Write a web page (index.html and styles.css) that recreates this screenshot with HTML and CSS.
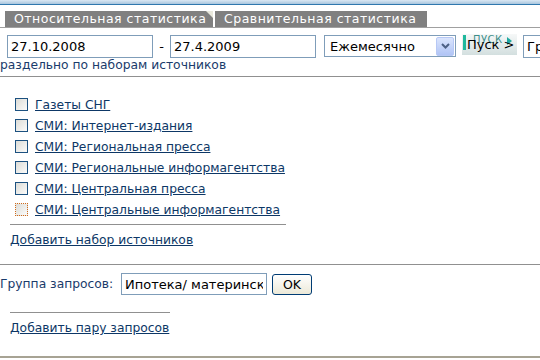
FILE: index.html
```html
<!DOCTYPE html>
<html lang="ru">
<head>
    <meta charset="UTF-8">
    <title>Статистика</title>
    <link rel="stylesheet" href="styles.css">
</head>
<body>
    <div class="topbar"></div>

    <div class="tabs">
        <div class="tab tab-first">Относительная статистика<span class="tab-corner"></span></div>
        <div class="tab">Сравнительная статистика</div>
    </div>

    <div class="filter-row">
        <input class="field date" type="text" value="27.10.2008">
        <span class="dash">-</span>
        <input class="field date" type="text" value="27.4.2009">
        <div class="select">
            <span class="select-text">Ежемесячно</span>
            <span class="select-btn">
                <svg width="9" height="6" viewBox="0 0 9 6"><path d="M1 1 L4.5 4.5 L8 1" fill="none" stroke="#4d6185" stroke-width="2"/></svg>
            </span>
        </div>
        <div class="go-btn">
            <span class="go-bar"></span>
            <span class="go-ghost">ПУСК</span>
            <span class="go-arrow"></span>
            <span class="go-text">Пуск &gt;</span>
        </div>
        <input class="field rest" type="text" value="Гр">
    </div>

    <div class="note">раздельно по наборам источников</div>

    <hr class="rule">

    <ul class="sources">
        <li><span class="box"></span><a href="#">Газеты СНГ</a></li>
        <li><span class="box"></span><a href="#">СМИ: Интернет-издания</a></li>
        <li><span class="box"></span><a href="#">СМИ: Региональная пресса</a></li>
        <li><span class="box"></span><a href="#">СМИ: Региональные информагентства</a></li>
        <li><span class="box"></span><a href="#">СМИ: Центральная пресса</a></li>
        <li><span class="box focused"></span><a href="#">СМИ: Центральные информагентства</a></li>
    </ul>
    <hr class="rule short">
    <a class="add-link" href="#">Добавить набор источников</a>

    <hr class="rule wide">

    <div class="query-row">
        <span class="query-label">Группа запросов:</span>
        <input class="field query" type="text" value="Ипотека/ материнский">
        <button class="ok-btn">OK</button>
    </div>
    <hr class="rule tiny">
    <a class="add-link" href="#">Добавить пару запросов</a>

    <div class="bottom-line"></div>
</body>
</html>
```

FILE: styles.css
```css
body {
    margin: 0;
    font-family: "DejaVu Sans", Verdana, sans-serif;
    font-size: 12px;
    color: #000;
    background-color: #fff;
    width: 540px;
    height: 360px;
    overflow: hidden;
    position: relative;
}

.topbar {
    height: 4px;
    background: linear-gradient(#dbe8f3, #a9c6de);
    border-bottom: 1px solid #2f78ae;
}

.tabs {
    display: flex;
    margin-top: 6px;
    padding-left: 5px;
    border-bottom: 1px solid #a0a0a0;
    height: 16px;
}

.tab {
    position: relative;
    flex-shrink: 0;
    background-color: #808080;
    color: #fff;
    font-size: 12.5px;
    letter-spacing: 0.5px;
    line-height: 16px;
    width: 203px;
    padding-left: 9px;
    margin-right: 2px;
    white-space: nowrap;
}

.tab-first {
    width: 199px;
}

.tab-corner {
    position: absolute;
    right: 0;
    top: 0;
    width: 0;
    height: 0;
    border-top: 7px solid #e8e8dc;
    border-left: 7px solid transparent;
}

.filter-row {
    display: flex;
    align-items: center;
    margin-top: 6px;
    padding-left: 7px;
    height: 24px;
    white-space: nowrap;
}

.filter-row > * {
    flex-shrink: 0;
}

.field {
    box-sizing: border-box;
    height: 23px;
    border: 1px solid #7f9db9;
    font-family: "DejaVu Sans", Verdana, sans-serif;
    font-size: 13px;
    padding: 1px 3px;
    color: #000;
}

.date {
    width: 146px;
}

.dash {
    width: 17px;
    text-align: center;
    font-size: 13px;
}

.select {
    box-sizing: border-box;
    display: flex;
    align-items: center;
    justify-content: space-between;
    width: 132px;
    height: 22px;
    margin-left: 8px;
    border: 1px solid #7f9db9;
    padding: 0 1px 0 5px;
    font-size: 13px;
}

.select-btn {
    display: flex;
    align-items: center;
    justify-content: center;
    width: 16px;
    height: 17px;
    border: 1px solid #b7c8f5;
    border-radius: 2px;
    background: linear-gradient(#dbe5fd, #b0c4f5);
}

.go-btn {
    position: relative;
    box-sizing: border-box;
    width: 55px;
    height: 21px;
    margin-left: 6px;
    margin-bottom: 3px;
    background: linear-gradient(#f6f8f8, #d3dfdf);
}

.go-bar {
    position: absolute;
    left: 1px;
    top: 1px;
    width: 3px;
    height: 15px;
    background-color: #1fb89c;
}

.go-ghost {
    position: absolute;
    left: 11px;
    top: 0;
    font-size: 10px;
    line-height: 11px;
    color: #3d8f8a;
    letter-spacing: 0.5px;
}

.go-arrow {
    position: absolute;
    right: 5px;
    top: 3px;
    width: 0;
    height: 0;
    border-left: 5px solid #1fa9a0;
    border-top: 4px solid transparent;
    border-bottom: 4px solid transparent;
}

.go-text {
    position: absolute;
    left: 5px;
    top: 3px;
    font-size: 13px;
    line-height: 15px;
    color: #000;
}

.rest {
    width: 40px;
    margin-left: 6px;
}

.note {
    margin-top: 0;
    color: #1a3b6b;
    font-size: 12.3px;
    line-height: 14px;
}

.rule {
    border: none;
    border-top: 1px solid #909090;
    margin: 4px 0 0 0;
    height: 0;
}

.sources {
    list-style: none;
    margin: 17px 0 0 0;
    padding: 0 0 0 15px;
}

.sources li {
    display: flex;
    align-items: center;
    height: 21px;
}

.box {
    box-sizing: border-box;
    flex-shrink: 0;
    width: 13px;
    height: 13px;
    border: 1px solid #1c5180;
    background: linear-gradient(135deg, #dcdcd7, #fbfbfa);
    margin-right: 7px;
}

.box.focused {
    border: 1px dotted #d06a1a;
}

.sources a,
.add-link {
    color: #0d3766;
    font-size: 12.3px;
}

.rule.short {
    width: 276px;
    margin: 4px 0 0 10px;
}

.add-link {
    display: block;
    margin: 8px 0 0 10px;
}

.rule.wide {
    margin-top: 17px;
}

.query-row {
    display: flex;
    align-items: center;
    margin-top: 8px;
}

.query-label {
    color: #1a3b6b;
    font-size: 12.3px;
    width: 121px;
}

.query {
    width: 146px;
    height: 22px;
    overflow: hidden;
}

.ok-btn {
    box-sizing: border-box;
    width: 40px;
    height: 21px;
    margin-left: 5px;
    border: 1px solid #003c74;
    border-radius: 3px;
    background: linear-gradient(#ffffff, #ece9d8);
    font-family: "DejaVu Sans", Verdana, sans-serif;
    font-size: 12.5px;
}

.rule.tiny {
    width: 160px;
    margin: 17px 0 0 10px;
}

.bottom-line {
    position: absolute;
    left: 0;
    right: 0;
    bottom: 2px;
    height: 2px;
    background-color: #a7a394;
}
```
